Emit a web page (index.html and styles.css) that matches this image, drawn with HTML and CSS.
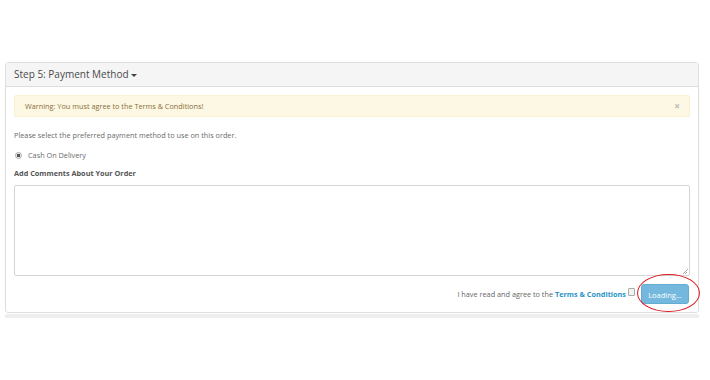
FILE: index.html
```html
<!DOCTYPE html>
<html>
<head>
<meta charset="utf-8">
<link rel="stylesheet" href="styles.css">
</head>
<body>
<div class="page">
  <div class="panel">
    <div class="panel-heading">Step 5: Payment Method <span class="caret"></span></div>
    <div class="panel-body">
      <div class="alert">Warning: You must agree to the Terms &amp; Conditions!<span class="close">&times;</span></div>
      <p class="intro">Please select the preferred payment method to use on this order.</p>
      <div class="radio-row"><span class="radio"></span>Cash On Delivery</div>
      <div class="label">Add Comments About Your Order</div>
      <div class="textarea"><span class="grip"></span></div>
      <div class="buttons">
        <span class="agree">I have read and agree to the <b class="link">Terms &amp; Conditions</b></span>
        <span class="checkbox"></span>
        <span class="btn-wrap">
          <span class="btn">Loading...</span>
          <span class="ring"></span>
        </span>
      </div>
    </div>
  </div>
  <div class="next-panel"></div>
</div>
</body>
</html>
```
FILE: styles.css
```css
* { box-sizing: border-box; }
body {
  margin: 0;
  background: #fff;
  font-family: "Open Sans", "Noto Sans", sans-serif;
  color: #6a6a6a;
  font-size: 7.3px;
}
.page {
  padding: 62px 11px 0 5px;
}
.panel {
  border: 1px solid #dedede;
  border-radius: 3px;
}
.panel-heading {
  height: 24px;
  background: #f5f5f5;
  border-bottom: 1px solid #dedede;
  padding: 0 8px;
  font-size: 10px;
  line-height: 23px;
  color: #4a4a4a;
  display: flex;
  align-items: center;
  gap: 2px;
}
.caret {
  width: 0;
  height: 0;
  border-left: 3px solid transparent;
  border-right: 3px solid transparent;
  border-top: 3px solid #444;
  margin-top: 1px;
}
.panel-body {
  padding: 8px 8px 8px 8px;
  display: flex;
  flex-direction: column;
}
.alert {
  height: 22px;
  background: #fcf8e3;
  border: 1px solid #faf0d3;
  border-radius: 2px;
  color: #8a6d3b;
  padding: 0 10px;
  line-height: 20px;
  display: flex;
  justify-content: space-between;
  align-items: center;
}
.close {
  color: #bbb;
  font-size: 10px;
  font-weight: bold;
  margin-right: -1px;
}
.intro {
  margin: 12px 0 0;
  line-height: 12px;
}
.radio-row {
  margin-top: 8px;
  line-height: 12px;
  display: flex;
  align-items: center;
  padding-left: 1px;
}
.radio {
  width: 7px;
  height: 7px;
  border-radius: 50%;
  border: 1px solid #aaa;
  background: radial-gradient(circle, #555 0 1.6px, #eee 2px);
  margin-right: 6px;
}
.label {
  margin-top: 6px;
  line-height: 12px;
  font-weight: bold;
  color: #555;
}
.textarea {
  margin-top: 6px;
  height: 91px;
  border: 1px solid #d4d4d4;
  border-radius: 2px;
  position: relative;
}
.grip {
  position: absolute;
  right: 1px;
  bottom: 1px;
  width: 5px;
  height: 5px;
  background: linear-gradient(135deg, transparent 45%, #aaa 45% 55%, transparent 55% 70%, #aaa 70% 80%, transparent 80%);
}
.buttons {
  margin-top: 8px;
  height: 20px;
  display: flex;
  justify-content: flex-end;
  align-items: center;
}
.agree {
  color: #666;
}
.link {
  color: #2a93c5;
}
.checkbox {
  width: 7px;
  height: 8px;
  border: 1px solid #aaa;
  border-radius: 1px;
  background: #f2f2f2;
  margin: -4px 6px 0 2px;
}
.btn-wrap {
  position: relative;
  margin-right: 1px;
}
.btn {
  display: block;
  width: 48px;
  height: 20px;
  line-height: 20px;
  text-align: center;
  color: #fff;
  background: #74b9dd;
  border: 1px solid #63acd2;
  border-radius: 3px;
  font-size: 7.5px;
}
.ring {
  position: absolute;
  left: -4px;
  top: -10px;
  width: 63px;
  height: 38px;
  border: 1.5px solid #e0161f;
  border-radius: 50%;
}
.next-panel {
  margin-top: 1px;
  height: 4px;
  background: #eee;
  border-radius: 2px 2px 0 0;
}
```
